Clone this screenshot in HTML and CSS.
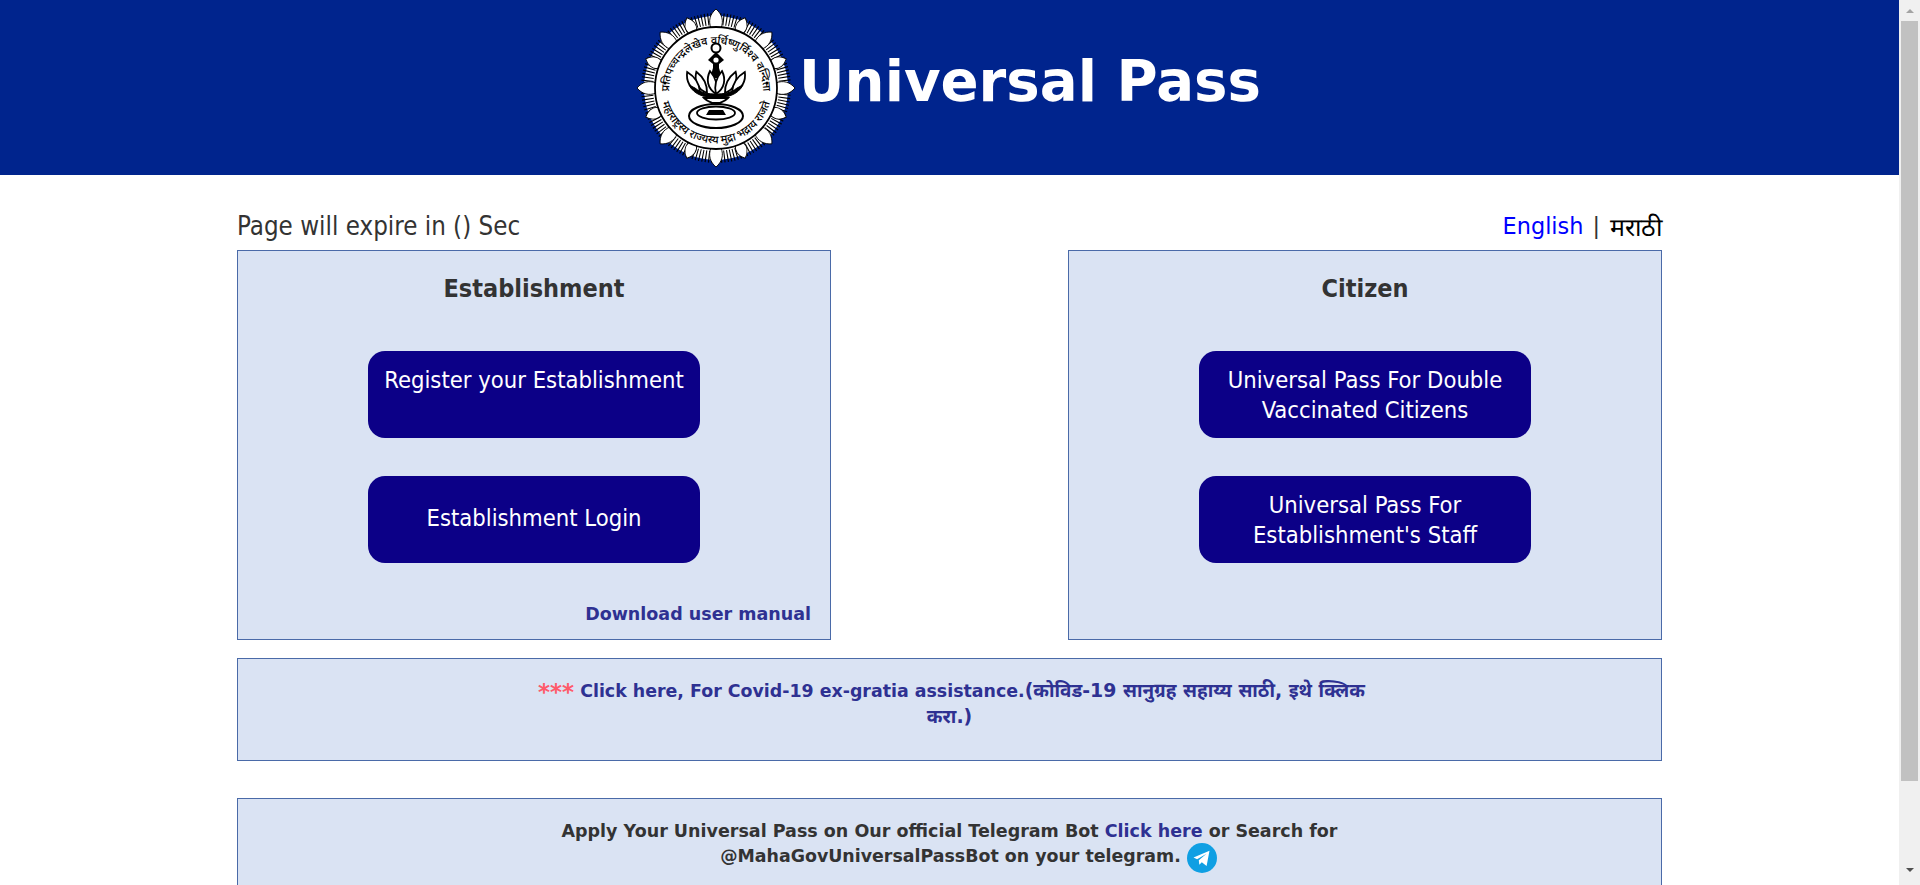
FILE: index.html
```html
<!DOCTYPE html>
<html lang="en">
<head>
<meta charset="utf-8">
<title>Universal Pass</title>
<link rel="stylesheet" href="styles.css">
</head>
<body>
<div class="shell">
  <div class="page">
    <header class="site-header">
      <svg class="emblem" viewBox="-80 -80 160 160" role="img" aria-label="Emblem">
        <defs>
          <path id="petal" d="M0 -79C6 -74 8 -67 5 -60H-5C-8 -67 -6 -74 0 -79Z" fill="#fff" stroke="#000" stroke-width=".9"/>
          <path id="minor" d="M0 -76C5 -72 7 -66 4 -60H-4C-7 -66 -5 -72 0 -76Z" fill="#fff" stroke="#000" stroke-width=".9"/>
          <path id="arcTop" d="M-47 3A47 47 0 1 1 47 3"/>
          <path id="arcBottom" d="M-56 4A56.2 56.2 0 0 0 56 4"/>
          <path id="lotus" d="M0 0C-9 -6 -10 -15 -6 -23C0 -16 2 -8 0 0Z" fill="#fff" stroke="#000" stroke-width="1.8"/>
        </defs>
        <circle r="72" fill="#fff"/>
        <circle r="69" fill="none" stroke="#000" stroke-width="12" stroke-dasharray="1.1 2"/>
        <use href="#minor" transform="rotate(22.5)"/><use href="#minor" transform="rotate(67.5)"/>
        <use href="#minor" transform="rotate(112.5)"/><use href="#minor" transform="rotate(157.5)"/>
        <use href="#minor" transform="rotate(202.5)"/><use href="#minor" transform="rotate(247.5)"/>
        <use href="#minor" transform="rotate(292.5)"/><use href="#minor" transform="rotate(337.5)"/>
        <use href="#petal"/><use href="#petal" transform="rotate(45)"/>
        <use href="#petal" transform="rotate(90)"/><use href="#petal" transform="rotate(135)"/>
        <use href="#petal" transform="rotate(180)"/><use href="#petal" transform="rotate(225)"/>
        <use href="#petal" transform="rotate(270)"/><use href="#petal" transform="rotate(315)"/>
        <circle r="61" fill="#fff" stroke="#000" stroke-width="1.8"/>
        <text class="seal-text"><textPath href="#arcTop" startOffset="50%" text-anchor="middle">प्रतिपच्चन्द्रलेखेव वर्धिष्णुर्विश्व वन्दिता</textPath></text>
        <text class="seal-text"><textPath href="#arcBottom" startOffset="50%" text-anchor="middle">महाराष्ट्रस्य राज्यस्य मुद्रा भद्राय राजते</textPath></text>
        <circle cx="-51" cy="-5" r="1.5"/><circle cx="51" cy="-5" r="1.5"/>
        <!-- lamp -->
        <circle cx="0" cy="-40" r="4.5" fill="none" stroke="#000" stroke-width="2"/>
        <path d="M0 -36L8 -28L3 -24L3 -20L-3 -20L-3 -24L-8 -28Z"/>
        <circle cx="0" cy="-28" r="2.6" fill="#fff"/>
        <path d="M-3 -20H3L6 -10H-6Z"/>
        <use href="#lotus" transform="translate(0 6)"/>
        <use href="#lotus" transform="translate(0 6) scale(-1 1)"/>
        <use href="#lotus" transform="translate(-9 5) rotate(-12)"/>
        <use href="#lotus" transform="translate(9 5) scale(-1 1) rotate(-12)"/>
        <use href="#lotus" transform="translate(-16 4) rotate(-18)"/>
        <use href="#lotus" transform="translate(16 4) scale(-1 1) rotate(-18)"/>
        <path d="M-27 -3C-22 7 -10 10 0 10C10 10 22 7 27 -3L21 0C15 5 8 6 0 6C-8 6 -15 5 -21 0Z" stroke="#000"/>
        <path d="M-12 10C-8 14 -5 14 -4 15H4C5 14 8 14 12 10Z" fill="#fff" stroke="#000" stroke-width="1.8"/>
        <path d="M-5 15H5L3 20H7V23H-7V20H-3Z"/>
        <ellipse cx="0" cy="28" rx="27" ry="12" fill="#fff" stroke="#000" stroke-width="2"/>
        <ellipse cx="0" cy="25" rx="19" ry="6.5" fill="none" stroke="#000" stroke-width="1.8"/>
        <path d="M-7 22H7L10 27H-10Z"/>
      </svg>
      <h1 class="site-title">Universal Pass</h1>
    </header>

    <main class="content">
      <div class="topline">
        <span class="expiry">Page will expire in () Sec</span>
        <span class="lang"><a class="lang-link" href="#">English</a><span class="sep">|</span><a class="lang-alt" href="#">मराठी</a></span>
      </div>

      <div class="columns">
        <section class="card panel">
          <h2 class="panel-title">Establishment</h2>
          <a class="action" href="#">Register your Establishment<br>&nbsp;</a>
          <a class="action action-single" href="#">Establishment Login</a>
          <a class="manual" href="#">Download user manual</a>
        </section>
        <section class="card panel">
          <h2 class="panel-title">Citizen</h2>
          <a class="action" href="#">Universal Pass For Double<br>Vaccinated Citizens</a>
          <a class="action" href="#">Universal Pass For<br>Establishment's Staff</a>
        </section>
      </div>

      <section class="card banner">
        <p class="banner-text"><span class="stars">***</span> <a class="link" href="#">Click here, For Covid-19 ex-gratia assistance.<span class="deva">(कोविड-19 सानुग्रह सहाय्य साठी, इथे क्लिक करा.)</span></a></p>
      </section>

      <section class="card banner telegram">
        <p class="banner-text telegram-text">Apply Your Universal Pass on Our official Telegram Bot <a class="link" href="#">Click here</a> or Search for<br>
          <span class="bot-line">@MahaGovUniversalPassBot on your telegram. <svg class="tg" viewBox="0 0 30 30" aria-hidden="true"><circle cx="15" cy="15" r="15" fill="#0f9fe3"/><path d="M6.5 14.6L22.5 7.8L19.6 23L14.8 19.3L12.3 21.7L11.8 17.3L19.5 10.7L10.1 16.2Z" fill="#fff"/></svg></span>
        </p>
      </section>
    </main>
  </div>

  <aside class="scrollbar" aria-hidden="true">
    <span class="arrow arrow-up"></span>
    <span class="thumb"></span>
    <span class="arrow arrow-down"></span>
  </aside>
</div>
</body>
</html>
```
FILE: styles.css
```css
* { box-sizing: border-box; }
html, body { margin: 0; height: 100%; overflow: hidden; }
body {
  font-family: "DejaVu Sans", "Noto Sans", sans-serif;
  color: #333;
  background: #fff;
}
a { text-decoration: none; }

.shell { display: flex; height: 885px; overflow: hidden; }
.page { flex: 1; min-width: 0; overflow: hidden; }

.site-header {
  height: 175px;
  background: #00248d;
  display: flex;
  align-items: center;
  justify-content: center;
  padding-right: 2px;
}
.emblem { width: 160px; height: 160px; flex: none; margin-right: 3px; }
.seal-text { font-family: "Noto Sans", "DejaVu Sans", sans-serif; font-size: 11px; font-weight: 500; fill: #000; }
.site-title {
  margin: 0 0 10px;
  font-size: 56.2px;
  font-weight: 700;
  color: #fff;
  line-height: 1;
}

.content { width: 1425px; margin: 0 auto; padding-top: 29px; }
.topline {
  display: flex;
  justify-content: space-between;
  align-items: center;
  height: 46px;
  padding-bottom: 3px;
  font-family: "DejaVu Sans Condensed", "DejaVu Sans", sans-serif;
  font-size: 25.7px;
}
.lang {
  display: flex;
  align-items: center;
  font-family: "DejaVu Sans", sans-serif;
  font-size: 22.4px;
}
.sep { margin: 0 10px 0 9px; }
.lang-link { color: #0000ff; }
.lang-alt { color: #000; font-size: 25px; }

.card { background: #dae3f3; border: 1px solid #4a6aa8; }
.columns { display: flex; justify-content: space-between; }
.panel {
  width: 594px;
  height: 390px;
  display: flex;
  flex-direction: column;
  align-items: center;
}
.panel-title {
  margin: 0;
  padding-top: 23px;
  height: 100px;
  font-family: "DejaVu Sans Condensed", "DejaVu Sans", sans-serif;
  font-size: 25px;
  line-height: 30px;
  font-weight: 700;
}
.action {
  width: 332px;
  height: 87px;
  margin-bottom: 38px;
  border-radius: 17px;
  background: #0c0087;
  color: #fff;
  font-family: "DejaVu Sans Condensed", "DejaVu Sans", sans-serif;
  font-size: 23.6px;
  line-height: 30px;
  text-align: center;
  display: flex;
  align-items: center;
  justify-content: center;
}
.action-single { padding-bottom: 4px; }
.manual {
  align-self: flex-end;
  margin: 3px 19px 0 0;
  font-size: 17.5px;
  font-weight: 700;
  color: #2e3192;
}

.banner { margin-top: 18px; height: 103px; padding: 19px 0 0; }
.telegram { margin-top: 37px; height: 200px; }
.banner-text {
  width: 850px;
  margin: 0 auto;
  font-size: 17.4px;
  line-height: 26px;
  font-weight: 700;
  text-align: center;
}
.telegram-text { font-size: 17.5px; line-height: 25px; padding-top: 1px; }
.stars { color: #ff5a6a; font-size: 23px; line-height: 20px; vertical-align: -3px; padding-left: 4px; }
.link { color: #2e3192; }
.deva { font-size: 18.9px; line-height: 20px; }
.bot-line { margin-left: 38px; font-size: 17.4px; }
.tg { width: 30px; height: 30px; margin: -4px 0 -6px; vertical-align: middle; }

.scrollbar {
  flex: none;
  width: 21px;
  background: #f0f0f0;
  display: flex;
  flex-direction: column;
  align-items: center;
  padding-top: 9px;
}
.arrow { width: 0; height: 0; border-left: 4.5px solid transparent; border-right: 4.5px solid transparent; }
.arrow-up { border-bottom: 4px solid #a3a3a3; }
.arrow-down { border-top: 4px solid #505050; margin-top: 87px; }
.thumb { width: 17px; height: 760px; margin-top: 8px; background: #c1c1c1; }
```
